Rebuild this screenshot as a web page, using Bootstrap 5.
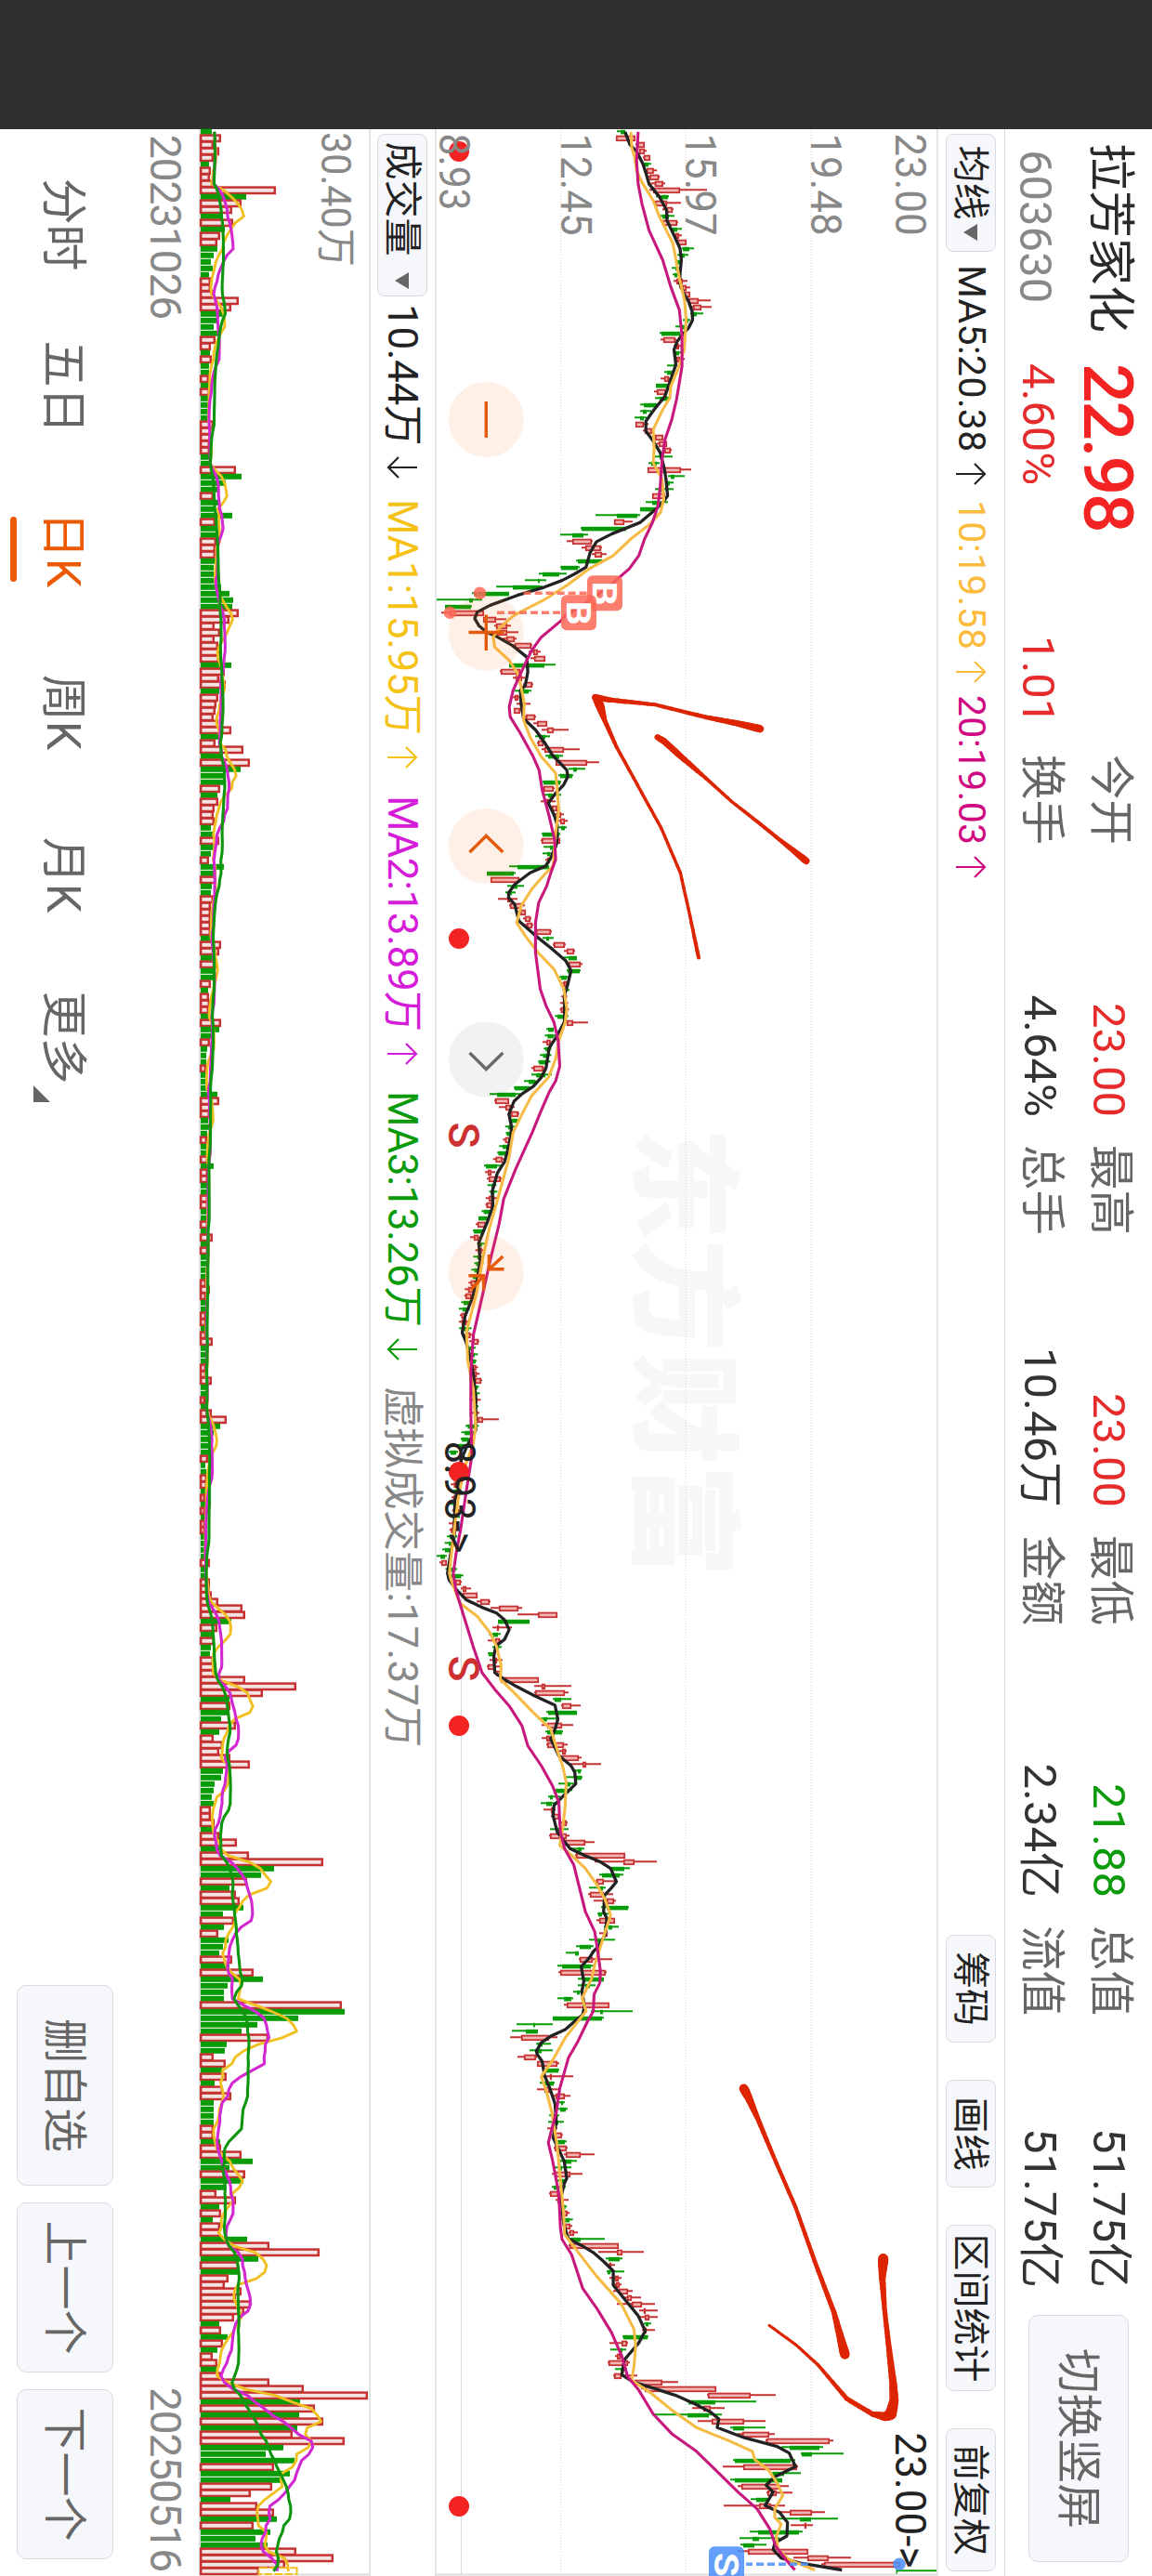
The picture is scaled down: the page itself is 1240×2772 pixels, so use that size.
<!DOCTYPE html>
<html lang="zh-CN">
<head>
    <meta charset="UTF-8">
    <meta name="viewport" content="width=device-width, initial-scale=1.0">
    <title>拉芳家化 603630</title>
    <!-- Bootstrap CSS -->
    <link href="https://cdn.jsdelivr.net/npm/bootstrap@5.3.3/dist/css/bootstrap.min.css" rel="stylesheet">
    <style>
        html, body { width: 1240px; height: 2772px; overflow: hidden; background: #fff; }
        body { font-family: Roboto, "Noto Sans CJK SC", sans-serif; color: #333; line-height: 1; }

        /* the whole page is laid out in landscape and turned a quarter */
        .viewport-box { width: 1240px; height: 2772px; overflow: hidden; }
        .screen { width: 2772px; height: 1240px; transform-origin: 0 0; transform: translateX(1240px) rotate(90deg); white-space: nowrap; }
        .notch { width: 139px; background: #303030; }
        .main-area { width: 2633px; }

        .c-up { color: #e52b2b; }
        .c-down { color: #0a9a0a; }
        .c-label { color: #666; }
        .c-grey { color: #888; }

        .quote-bar { height: 159px; border-bottom: 1px solid #d8d8d8; }
        .quote { display: grid; grid-template-columns: 237px 293px 143px; grid-template-rows: 80px 78px; align-items: center; width: 673px; padding-left: 15px; }
        .stock-name { font-size: 51px; color: #2a2a2a; padding-top: 9px; }
        .stock-price { grid-column: span 2; font-size: 75px; font-weight: 500; color: #f32323; letter-spacing: -2.2px; padding-top: 14px; }
        .stock-code { font-size: 49px; color: #888; padding: 13px 0 0 7px; }
        .stock-diff { font-size: 49px; padding-top: 7px; letter-spacing: -.1px; }
        .stat-pair { width: 390px; height: 74px; font-size: 48.5px; }
        .stat-num { font-size: 49px; padding-top: 3px; }
        .stats { gap: 30px; width: 1650px; padding-top: 8px; }

        .soft-btn { background: #f6f7fa; border: 1px solid #d8dbe0; border-radius: 10px; color: #222; line-height: 1; padding: 0; display: flex; align-items: center; justify-content: center; }
        .switch-btn { width: 266px; height: 108px; font-size: 48.5px; color: #666; margin: 25px 15px 0 auto; padding-top: 2px; }

        .tool-bar { height: 73px; border-bottom: 2px solid #e4e4e4; font-size: 41px; letter-spacing: .3px; padding: 0 5px; }
        .tool-btn { height: 54px; font-size: 40px; border-radius: 8px; padding-top: 2px; letter-spacing: 0; }
        .tri { border: 9px solid transparent; border-top: 15px solid #666; border-bottom: 0; }
        .arr { width: 24px; height: 34px; fill: none; stroke: currentColor; stroke-width: 2.2; }
        .c-ma5 { color: #222; }
        .c-ma10 { color: #fbbb3c; }
        .c-ma20 { color: #cf0a82; }
        .c-v5 { color: #f5c218; }
        .c-v10 { color: #d51cd8; }

        .price-chart { height: 538px; display: block; }
        .vol-bar { height: 73px; font-size: 44px; letter-spacing: -.35px; padding-left: 5px; border-top: 2px solid #e4e4e4; border-bottom: 2px solid #e4e4e4; }
        .vol-chart { height: 183px; display: block; }
        .date-axis { height: 62px; font-size: 46px; color: #888; letter-spacing: -1.1px; padding: 13px 5px 0 6px; }

        .period-tabs { font-size: 50px; color: #666; padding-left: 15px; }
        .period-tab { width: 175px; height: 104px; display: flex; align-items: center; justify-content: center; position: relative; padding-top: 3px; }
        .period-tab.active { color: #eb5a00; }
        .period-tab.active::after { content: ""; position: absolute; width: 70px; height: 7px; border-radius: 4px; background: #eb5a00; bottom: -7px; left: 52px; }
        .more-tri { position: absolute; left: 139px; bottom: 18px; border-left: 18px solid transparent; border-bottom: 18px solid #666; }
        .foot-btn { height: 104px; width: 183px; font-size: 48px; color: #666; padding-top: 2px; }
        svg { overflow: visible; }
        svg text { font-family: Roboto, "Noto Sans CJK SC", sans-serif; }
    </style>
</head>
<body>
<div class="viewport-box">
<div class="screen d-flex">
    <div class="notch flex-shrink-0"></div>
    <div class="main-area d-flex flex-column flex-shrink-0">

        <!-- Quote -->
        <header class="quote-bar d-flex flex-shrink-0">
            <div class="quote flex-shrink-0">
                <div class="stock-name">拉芳家化</div>
                <div class="stock-price">22.98</div>
                <div class="stock-code">603630</div>
                <div class="stock-diff c-up">4.60%</div>
                <div class="stock-diff c-up">1.01</div>
            </div>
            <div class="stats d-flex flex-shrink-0">
                <div>
                    <div class="stat-pair d-flex align-items-center justify-content-between"><span class="c-label">今开</span><span class="stat-num c-up">23.00</span></div>
                    <div class="stat-pair d-flex align-items-center justify-content-between"><span class="c-label">换手</span><span class="stat-num">4.64%</span></div>
                </div>
                <div>
                    <div class="stat-pair d-flex align-items-center justify-content-between"><span class="c-label">最高</span><span class="stat-num c-up">23.00</span></div>
                    <div class="stat-pair d-flex align-items-center justify-content-between"><span class="c-label">总手</span><span class="stat-num">10.46万</span></div>
                </div>
                <div>
                    <div class="stat-pair d-flex align-items-center justify-content-between"><span class="c-label">最低</span><span class="stat-num c-down">21.88</span></div>
                    <div class="stat-pair d-flex align-items-center justify-content-between"><span class="c-label">金额</span><span class="stat-num">2.34亿</span></div>
                </div>
                <div>
                    <div class="stat-pair d-flex align-items-center justify-content-between"><span class="c-label">总值</span><span class="stat-num">51.75亿</span></div>
                    <div class="stat-pair d-flex align-items-center justify-content-between"><span class="c-label">流值</span><span class="stat-num">51.75亿</span></div>
                </div>
            </div>
            <button class="soft-btn switch-btn" type="button">切换竖屏</button>
        </header>

        <!-- MA toolbar -->
        <div class="tool-bar d-flex align-items-center flex-shrink-0">
            <button class="soft-btn tool-btn" type="button" style="width: 127px">均线<i class="tri ms-1"></i></button>
            <span class="c-ma5 d-flex align-items-center" style="width: 253px; padding-left: 14px">MA5:20.38<svg class="arr" style="margin-left: 11px" viewBox="0 0 24 34"><path d="M12 33V2M1 13L12 2L23 13"/></svg></span>
            <span class="c-ma10 d-flex align-items-center" style="width: 210px; padding-left: 14px">10:19.58<svg class="arr" style="margin-left: 12px" viewBox="0 0 24 34"><path d="M12 33V2M1 13L12 2L23 13"/></svg></span>
            <span class="c-ma20 d-flex align-items-center" style="padding-left: 14px">20:19.03<svg class="arr" style="margin-left: 12px" viewBox="0 0 24 34"><path d="M12 33V2M1 13L12 2L23 13"/></svg></span>
            <div class="d-flex ms-auto" style="gap: 40px">
                <button class="soft-btn tool-btn" type="button" style="width: 116px">筹码</button>
                <button class="soft-btn tool-btn" type="button" style="width: 116px">画线</button>
                <button class="soft-btn tool-btn" type="button" style="width: 179px">区间统计</button>
                <button class="soft-btn tool-btn" type="button" style="width: 154px">前复权</button>
            </div>
        </div>

        <!-- Price chart -->
        <svg class="price-chart flex-shrink-0" id="priceChart" width="2633" height="538" viewBox="139 232 2633 538"></svg>

        <!-- Volume legend -->
        <div class="vol-bar d-flex align-items-center flex-shrink-0">
            <button class="soft-btn tool-btn" type="button" style="width: 175px; font-size: 41px">成交量<i class="tri" style="margin-left: 17px"></i></button>
            <span class="c-ma5 d-flex align-items-center" style="width: 212px; padding-left: 8px">10.44万<svg class="arr" style="margin-left: 12px" viewBox="0 0 24 34"><path d="M12 1V32M1 21L12 32L23 21"/></svg></span>
            <span class="c-v5 d-flex align-items-center" style="width: 319px; padding-left: 6px">MA1:15.95万<svg class="arr" style="margin-left: 12px" viewBox="0 0 24 34"><path d="M12 33V2M1 13L12 2L23 13"/></svg></span>
            <span class="c-v10 d-flex align-items-center" style="width: 318px; padding-left: 6px">MA2:13.89万<svg class="arr" style="margin-left: 12px" viewBox="0 0 24 34"><path d="M12 33V2M1 13L12 2L23 13"/></svg></span>
            <span class="c-down d-flex align-items-center" style="width: 324px; padding-left: 6px">MA3:13.26万<svg class="arr" style="margin-left: 12px" viewBox="0 0 24 34"><path d="M12 1V32M1 21L12 32L23 21"/></svg></span>
            <span class="c-grey" style="letter-spacing: .3px">虚拟成交量:17.37万</span>
        </div>

        <!-- Volume chart -->
        <svg class="vol-chart flex-shrink-0" id="volChart" width="2633" height="183" viewBox="139 843 2633 183"></svg>

        <div class="date-axis d-flex justify-content-between flex-shrink-0">
            <span>20231026</span><span>20250516</span>
        </div>

        <!-- Bottom bar -->
        <footer class="d-flex flex-grow-1" style="padding-top: 30px">
            <nav class="period-tabs d-flex">
                <div class="period-tab">分时</div>
                <div class="period-tab">五日</div>
                <div class="period-tab active">日K</div>
                <div class="period-tab">周K</div>
                <div class="period-tab">月K</div>
                <div class="period-tab">更多<i class="more-tri"></i></div>
            </nav>
            <div class="d-flex ms-auto" style="gap: 18px; margin-right: 18px">
                <button class="soft-btn foot-btn" type="button" style="width: 216px">删自选</button>
                <button class="soft-btn foot-btn" type="button">上一个</button>
                <button class="soft-btn foot-btn" type="button">下一个</button>
            </div>
        </footer>
    </div>
</div>
</div>

<script>
    const BASE = 1240;   // values count upwards from the bottom edge
    const STEP = 7, FIRST = 141.8;
    const RED = '#c63232', GREEN = '#089c08';
    const dayX = i => FIRST + STEP * i;

    // Daily volume, negative = falling day
    const vol = [
        -12,22,14,20,14,-9,11,10,14,81,-49,44,34,-24,35,-26,21,18,-18,-14,-11,-13,-9,11,11,14,41,33,-24,-17,-14,-20,16,11,-10,12,-9,-9,9,-9,
        10,-8,-8,-8,-8,14,14,11,10,10,-11,-9,38,-44,-27,-18,14,-19,-14,-34,16,-18,-18,17,16,16,-17,-14,-14,-16,-22,-31,-35,-34,41,31,15,21,15,19,
        20,20,-33,26,20,27,-20,19,17,16,14,19,33,-21,16,46,-24,53,-43,-25,-25,21,-18,19,15,14,15,-11,-14,20,-14,-11,9,-25,-17,17,-12,-11,14,11,
        11,11,11,11,-12,22,20,-16,18,-15,-14,11,-8,9,10,9,-9,22,-20,-11,10,-7,-6,-6,6,-7,-7,-7,-18,20,11,10,-8,-9,-7,7,-6,-7,8,-14,
        8,8,-7,-7,8,8,-7,-7,8,-6,13,-7,8,-6,-6,-6,-7,6,10,6,-6,-6,6,6,-6,6,13,-6,-5,-5,6,6,12,-6,-6,5,-5,12,28,-21,
        -14,-12,-9,-10,8,-5,-6,7,7,-6,5,-6,5,-5,5,5,-5,-5,-5,-5,10,-5,-6,10,10,12,19,45,48,-33,18,-15,15,-11,-10,14,17,16,48,103,
        67,-31,32,-31,-22,38,-20,14,24,20,32,53,-24,-22,-15,-14,-12,-14,11,11,15,-16,20,39,-20,52,132,-79,-65,50,-31,38,42,-46,-24,36,-25,19,-30,-24,
        -20,34,-31,57,-67,-29,-25,-25,152,-155,-105,-61,-44,73,-28,-26,14,27,-23,28,-15,24,33,-14,-14,-14,-14,14,14,-21,22,44,-56,-31,48,-46,-27,17,38,-20,
        22,-13,21,21,-50,74,128,-62,41,-40,30,26,44,38,54,47,36,-20,22,-29,24,-18,13,18,-17,22,74,111,180,-107,123,-106,132,-104,99,155,-89,-70,-101,79,
        -96,-86,77,54,-32,61,79,-82,57,-75,-59,-72,103,143,91,63
    ];

    // A line is kept in pieces: [x offset, value offset, x scale, value scale, points]
    const joinPieces = pieces => {
        const out = [];
        pieces.forEach(([x0, v0, kx, kv, pts]) => {
            for (let k = 0; k < pts.length; k += 2) {
                const x = x0 + pts[k] / kx, v = v0 + pts[k + 1] / kv;
                if (!out.length || x > out[out.length - 1][0] + 3) out.push([x, v]);
            }
        });
        return out;
    };
    const K = 2.904;
    const ma5 = joinPieces([
        [130, 450, 2.8, K, [33,647,72,662,92,683,130,703,160,713,190,722,230,755,270,777,300,778,345,800,385,819,420,823,460,819,490,818,520,830,545,846,575,857,600,858,625,845,645,825,665,810,690,800,735,806,770,793,830,772,870,738,905,712,935,712,965,735,1000,757,1050,770,1080,775,1130,780,1150,765,1175,738,1210,695,1245,605,1268,558,1300,538,1345,525,1365,490,1385,450,1405,395,1430,310,1460,225,1480,185,1500,177]],
        [600, 450, 2.8, K, [205,190,225,215,235,240,265,295,300,340,345,343,385,335,400,320,440,322,485,330,520,368,560,397,595,420,640,465,660,468,685,455,710,430,740,407,775,425,805,435,860,434,905,415,930,398,950,350,985,302,1010,283,1025,283,1045,302,1095,315,1140,368,1180,420,1215,462,1245,478,1285,468,1320,457,1380,458]],
        [1100, 450, 2.529, K, [0,457,40,432,70,410,125,400,150,385,175,360,195,325,215,300,250,284,285,292,310,290,360,277,380,270,410,248,460,232,500,234,540,218,600,190,650,194,700,185,750,170,800,147,845,138,870,150,920,165,960,173,1020,180,1080,180,1110,180,1150,155,1190,135,1220,130,1250,135,1300,115,1400,113,1440,103,1500,92]],
        [1700, 450, 2.8, K, [0,97,30,120,60,150,85,205,100,245,120,270,150,285,180,270,200,243,230,237,280,240,300,270,320,305,350,365,378,428,420,437,450,428,480,415,530,440,560,478,580,490,615,493,650,455,680,425,710,422,760,435,785,455,810,475,830,520,850,570,870,602,910,620,930,603,950,583,1000,580,1020,590,1070,585,1105,563,1120,548,1140,535,1165,510,1210,518,1240,512,1285,520,1310,515,1330,490,1355,460,1375,415,1395,385,1420,370]],
        [2200, 450, 2.741, K, [30,373,50,388,90,395,130,412,175,428,230,432,275,422,310,440,345,457,395,465,410,457,450,447,530,455,573,470,595,515,615,550,640,580,668,610,710,610,745,640,800,688,845,710,880,690,930,645,975,637,995,672,1015,740,1035,805,1060,865,1085,915,1105,940,1130,935,1160,1020,1185,1120,1205,1160,1245,1180,1275,1115,1300,1088,1320,1110,1360,1085,1380,1130,1410,1155,1450,1153,1470,1115,1490,1110,1515,1135,1530,1195,1550,1325]]
    ]);
    const ma10 = joinPieces([
        [130, 450, 2.8, K, [33,665,80,668,110,677,150,683,185,700,240,735,290,755,370,797,430,808,480,818,540,833,600,838,690,832,750,812,800,790,835,787,870,765,930,735,985,738,1030,735,1080,763,1140,768,1180,758,1215,725,1260,665,1310,610,1350,535,1400,465,1440,400,1490,300]],
        [600, 450, 2.8, K, [190,280,215,252,240,235,270,240,310,285,350,312,390,322,440,332,490,330,540,350,600,385,650,430,700,435,760,440,830,430,930,422,950,400,1000,355,1050,322,1100,308,1140,335,1190,375,1240,425,1300,456,1360,465]],
        [1100, 450, 2.529, K, [0,460,50,440,100,430,150,408,200,355,250,325,300,297,370,284,440,262,500,243,560,223,600,213,640,203,740,182,840,152,920,155,1000,173,1100,180,1150,172,1220,142,1300,125,1440,105,1500,98]],
        [1700, 450, 2.8, K, [0,103,70,130,110,185,160,225,200,245,260,260,300,257,340,300,400,360,450,415,520,437,560,452,610,463,680,460,740,453,800,443,830,480,870,523,920,560,960,583,1010,602,1070,582,1160,552,1200,543,1260,513,1300,525,1330,500,1380,460]],
        [2200, 450, 2.741, K, [40,425,95,385,140,402,200,418,300,435,400,445,500,455,560,458,600,490,680,555,765,635,840,675,890,680,950,675,990,668,1030,730,1080,795,1130,870,1170,975,1200,1045,1225,1053,1255,1095,1290,1120,1330,1140,1370,1115,1395,1115,1415,1135,1450,1120,1490,1125,1520,1160,1550,1240]]
    ]);
    const ma20 = joinPieces([
        [130, 450, 2.8, K, [33,688,120,683,190,688,250,700,330,722,420,765,500,790,570,817,650,825,740,825,840,808,900,793,960,772,1020,763,1100,757,1160,750,1210,733,1260,708,1310,690,1350,660,1400,600,1450,530,1490,460]],
        [600, 450, 2.8, K, [190,447,240,385,280,355,340,325,400,297,450,285,480,288,530,320,600,360,640,378,700,388,780,410,850,427,910,430,950,415,990,402,1040,377,1100,367,1190,367,1300,382,1350,400]],
        [1100, 450, 2.529, K, [0,425,50,438,120,443,160,430,190,410,240,385,300,357,400,305,480,268,550,253,650,225,740,202,850,173,950,165,1060,165,1180,168,1280,150,1380,133,1440,120,1500,110]],
        [1700, 450, 2.8, K, [30,118,100,140,200,172,280,200,330,240,380,285,440,325,500,343,560,385,620,420,670,440,760,445,810,458,860,487,930,505,1000,523,1060,552,1120,562,1180,570,1215,568,1250,550,1300,548,1330,530,1390,500]],
        [2200, 450, 2.741, K, [40,470,130,443,200,432,250,418,290,407,340,420,440,440,540,445,575,450,620,480,720,515,780,560,850,605,920,637,980,655,1020,690,1090,735,1150,795,1200,870,1260,935,1320,1000,1370,1060,1430,1100,1480,1118,1520,1150,1550,1178]]
    ]);

    // Candles: [low, body low, body high, high]; days left out sit on the MA5
    const candles = {
        0:[664,668,673,673],1:[663,663,684,684],2:[684,686,694,694],3:[688,688,694,696],4:[692,693,700,700],5:[692,694,698,701],9:[699,703,732,761],
        10:[706,712,719,720],11:[705,705,718,733],12:[713,717,724,725],13:[710,713,720,726],14:[713,713,729,730],15:[722,724,729,734],16:[724,727,731,734],17:[728,729,739,739],18:[734,735,742,747],19:[729,733,737,741],
        20:[727,729,732,733],21:[723,727,729,731],22:[724,726,729,731],23:[725,728,735,740],24:[731,734,739,743],25:[734,736,743,743],26:[740,741,752,765],27:[742,746,755,766],28:[743,746,750,757],29:[735,738,741,743],30:[727,732,737,739],31:[710,712,732,732],32:[711,714,727,728],
        33:[725,728,731,733],34:[725,727,731,733],35:[726,728,732,737],36:[718,725,727,729],37:[715,718,725,725],38:[711,715,720,722],39:[706,706,720,723],40:[704,707,717,717],41:[705,710,720,722],42:[689,693,707,707],43:[689,692,696,701],44:[683,689,693,696],45:[684,684,693,698],46:[692,694,702,702],47:[703,705,714,714],48:[707,709,718,718],49:[713,715,722,723],
        50:[704,710,714,724],51:[698,701,707,710],52:[697,697,733,744],53:[719,722,726,737],54:[717,719,721,725],55:[705,709,713,725],56:[702,702,716,716],57:[695,702,708,719],58:[689,689,706,707],59:[641,664,686,689],
        60:[661,661,672,681],61:[625,626,674,674],62:[603,616,628,633],63:[610,616,637,638],64:[626,630,647,648],65:[637,640,648,653],66:[620,622,648,649],67:[603,604,622,624],68:[580,584,602,610],69:[565,579,581,588],
        70:[534,552,581,584],71:[508,510,548,548],72:[470,505,509,519],73:[479,479,507,508],74:[475,484,521,521],75:[520,520,534,545],76:[532,534,546,550],77:[529,534,546,558],78:[541,545,554,556],79:[550,554,572,573],
        80:[569,574,579,582],81:[571,575,587,587],82:[548,548,586,598],83:[538,539,560,560],84:[552,555,562,565],85:[563,565,573,574],86:[554,561,569,572],87:[550,554,558,560],88:[556,560,562,571],89:[553,553,560,562],
        90:[563,566,576,577],91:[574,578,589,589],92:[583,589,596,612],93:[576,580,587,592],94:[578,579,585,588],95:[583,586,607,624],96:[587,590,602,606],97:[598,598,632,645],98:[612,617,621,630],99:[601,603,616,617],
        100:[584,585,603,604],101:[582,585,596,597],102:[584,590,594,604],103:[582,588,591,598],104:[591,594,600,600],105:[596,599,604,607],106:[601,603,608,611],107:[601,604,608,610],108:[583,584,602,603],109:[582,583,603,603],
        110:[585,592,596,600],111:[584,589,592,595],112:[587,589,592,593],113:[548,557,591,591],114:[524,524,553,555],115:[528,528,559,560],116:[546,551,557,564],117:[544,547,551,555],118:[536,546,549,557],119:[548,549,562,565],
        120:[557,560,566,566],121:[563,565,571,572],122:[565,567,573,574],123:[577,577,593,594],124:[584,588,591,596],125:[595,596,608,609],126:[607,610,618,619],127:[607,612,621,621],128:[612,612,625,627],129:[610,611,624,625],130:[602,604,610,612],
        137:[607,610,617,633],138:[588,590,596,596],145:[572,577,587,594],146:[564,569,576,577],147:[553,554,570,572],148:[527,535,555,560],149:[532,533,548,548],150:[537,544,550,554],151:[548,550,558,559],152:[550,551,557,559],
        159:[521,523,535,539],160:[522,525,529,533],161:[524,526,539,540],167:[515,515,524,525],168:[512,514,523,524],169:[509,510,521,521],170:[506,510,515,516],186:[505,508,515,516],192:[510,511,518,519],198:[512,514,520,537],
        202:[489,493,503,505],203:[483,485,491,493],218:[476,479,484,485],219:[469,474,479,481],220:[473,475,481,481],223:[489,490,496,497],224:[496,498,502,507],225:[496,498,514,514],226:[513,517,527,528],227:[528,537,558,562],228:[557,579,600,600],229:[536,536,570,570],
        230:[530,535,537,551],231:[526,531,536,539],232:[525,533,538,539],233:[530,533,537,540],234:[525,526,530,533],235:[527,532,535,541],236:[524,525,533,539],237:[532,534,539,540],238:[539,539,580,580],239:[575,583,587,615],
        240:[575,576,608,612],241:[595,597,604,615],242:[604,605,615,625],243:[588,590,621,621],244:[579,585,589,600],245:[583,589,605,617],246:[587,589,605,606],247:[583,588,592,593],248:[588,589,607,611],249:[601,605,609,610],
        250:[603,604,623,626],251:[614,627,631,647],252:[619,622,625,626],253:[608,618,626,627],254:[601,610,614,618],255:[598,598,613,616],256:[590,592,595,603],257:[582,588,594,598],258:[585,593,597,598],259:[593,595,602,603],
        260:[601,606,610,611],261:[592,600,604,612],262:[591,592,610,613],263:[607,608,630,640],264:[615,622,626,629],265:[619,620,673,673],266:[640,671,683,707],267:[656,658,672,678],268:[645,648,667,671],269:[641,642,650,663],
        270:[634,644,649,652],271:[633,635,650,660],272:[639,653,661,663],273:[647,653,676,677],274:[643,644,648,655],275:[642,645,662,662],276:[650,655,659,666],277:[645,651,654,654],278:[634,641,646,662],279:[620,624,636,639],
        280:[609,619,623,623],281:[623,624,638,659],282:[600,605,636,639],283:[601,603,652,653],284:[622,627,650,650],285:[622,630,635,641],286:[617,621,624,626],287:[600,607,615,617],288:[607,610,656,656],289:[636,646,649,681],
        290:[595,595,648,650],291:[556,574,576,595],292:[551,566,579,579],293:[549,561,591,600],294:[577,579,584,593],295:[570,576,583,595],296:[557,564,577,578],297:[578,578,600,602],298:[586,587,601,602],299:[583,592,594,617],
        300:[581,586,596,597],301:[578,586,592,602],302:[596,598,608,614],303:[601,604,606,608],304:[600,603,609,611],306:[590,597,601,607],307:[589,594,598,600],310:[596,597,610,611],311:[607,609,625,640],312:[601,608,615,621],313:[595,601,605,615],314:[594,597,614,627],316:[594,596,600,609],317:[591,592,601,602],318:[598,600,606,612],
        322:[607,608,614,616],323:[612,613,618,622],324:[614,615,625,651],325:[612,613,666,666],326:[644,664,670,693],327:[652,655,667,670],328:[653,656,658,662],329:[653,654,657,672],330:[656,662,666,669],331:[659,663,667,669],332:[660,666,676,681],333:[669,675,680,690],334:[664,680,691,705],335:[688,693,695,708],336:[688,694,699,708],337:[693,695,698,701],338:[691,694,696,705],339:[670,671,697,698],
        340:[656,669,675,676],341:[657,668,670,674],342:[662,664,668,670],343:[654,655,676,678],344:[662,668,671,675],345:[660,661,669,686],346:[682,683,713,730],347:[690,694,771,771],348:[761,762,808,835],349:[739,741,770,814],
        350:[745,757,765,780],351:[703,740,763,777],352:[751,766,801,824],353:[786,789,801,824],354:[794,799,828,834],355:[824,825,893,897],356:[841,850,882,886],357:[862,863,874,908],358:[789,791,851,856],359:[778,800,858,859],
        360:[831,832,844,862],361:[786,791,842,842],362:[794,798,839,849],363:[825,826,836,853],364:[808,814,826,828],365:[779,817,830,845],366:[839,850,874,888],367:[836,861,873,902],368:[851,867,868,875],369:[807,816,860,864],
        370:[796,810,817,839],371:[797,800,812,825],372:[794,805,870,870],373:[854,869,892,916],374:[884,887,969,969],375:[965,965,966,1008]
    };

    const valueAt = (pts, x) => {
        for (let k = 1; k < pts.length; k++) {
            if (pts[k][0] >= x) {
                const [xa, va] = pts[k - 1], [xb, vb] = pts[k];
                return va + (vb - va) * (x - xa) / (xb - xa);
            }
        }
        return pts[pts.length - 1][1];
    };
    const poly = (pts, color, w) => `<polyline points="${pts.map(p => p[0].toFixed(1) + ',' + (BASE - p[1]).toFixed(1)).join(' ')}" fill="none" stroke="${color}" stroke-width="${w}" stroke-linejoin="round"/>`;
    const label = (x, v, size, len, color, str, extra = '') => `<text x="${x}" y="${BASE - v}" font-size="${size}" fill="${color}" textLength="${len}" lengthAdjust="spacingAndGlyphs" ${extra}>${str}</text>`;

    let s = '';
    // Grid and watermark
    s += '<text x="1213" y="547" font-size="121" font-weight="900" fill="#f7f7f7" textLength="484">东方财富</text>';
    [603.5, 738, 873].forEach(v => s += `<line x1="139" x2="2770" y1="${BASE - v}" y2="${BASE - v}" stroke="#d4d4d4" stroke-dasharray="1 2"/>`);
    s += '<line x1="1705" x2="2770" y1="743.5" y2="743.5" stroke="#d8d8d8"/><line x1="2770.5" x2="2770.5" y1="232" y2="770" stroke="#dedede" stroke-width="2"/>';

    // Candles
    vol.forEach((n, i) => {
        const x = dayX(i);
        let c = candles[i];
        if (!c) {
            const a = valueAt(ma5, x + 9), b = valueAt(ma5, x + 18), r = (i * 37 % 11) / 3;
            c = [Math.min(a, b) - 2 - r, Math.min(a, b) - 1, Math.max(a, b) + 2, Math.max(a, b) + 3 + (i * 23 % 7) / 2];
        }
        const [lo, b0, b1, hi] = c;
        const up = n > 0 && i !== 375;
        const col = up ? RED : GREEN;
        s += `<line x1="${x - .5}" x2="${x - .5}" y1="${BASE - hi}" y2="${BASE - lo}" stroke="${col}" stroke-width="2"/>`;
        s += up
            ? `<rect x="${x - 2.2}" y="${BASE - b1 + .8}" width="4.6" height="${Math.max(b1 - b0 - 1.6, .5)}" fill="#f3b4b4" stroke="${RED}" stroke-width="1.8"/>`
            : `<rect x="${x - 2}" y="${BASE - b1}" width="4.6" height="${Math.max(b1 - b0, 1.5)}" fill="${GREEN}"/>`;
    });
    s += poly(ma5, '#222', 3.3) + poly(ma10, '#f5bb45', 3.1) + poly(ma20, '#c8187e', 3.1);

    // Signal dots and letters
    [163, 1010, 1584, 1857, 2697].forEach(x => s += `<circle cx="${x}" cy="746" r="11" fill="#f32323"/>`);
    [1207.5, 1781.5].forEach(x => s += label(x, 483, 47, 28, '#cc3030', 'S', 'font-weight="500"'));

    // Buy and sell marks
    const mark = (x, dotV, v0, v1, boxV, color, letter) => {
        s += `<g opacity=".86"><line x1="${x}" x2="${x}" y1="${BASE - v0}" y2="${BASE - v1}" stroke="${color}" stroke-width="3.5" stroke-dasharray="8 4"/><circle cx="${x}" cy="${BASE - dotV}" r="6.8" fill="${color}"/>`;
        s += `<rect x="${x - 19}" y="${BASE - boxV - 38}" width="38" height="38" rx="6" fill="${color}"/></g><text x="${x - 12.5}" y="${BASE - boxV - 6}" font-size="36" font-weight="700" fill="#fff" textLength="26" lengthAdjust="spacingAndGlyphs">${letter}</text>`;
    };
    mark(638.2, 516.5, 563.6, 632, 632, '#fb6a58', 'B');
    mark(659.3, 484.4, 535, 603, 604, '#fb6a58', 'B');
    mark(2759.3, 968, 870, 803, 763, '#4a90fb', 'S');

    // Round chart buttons
    const round = (x, grey, d) => s += `<circle cx="${x}" cy="716.7" r="40.5" fill="${grey ? '#000' : '#ff6a10'}" opacity="${grey ? .05 : .1}"/><path d="${d}" fill="none" stroke="${grey ? '#6a6a6a' : '#e55a0a'}" stroke-width="3.4"/>`;
    round(451.5, 0, 'M432 716.7H471');
    round(681, 0, 'M661.5 716.7H700M680.5 697.5V735.5');
    round(910.5, 0, 'M917 698.7L899.5 716.7L917 734.5');
    round(1140, 1, 'M1133 698.7L1150.5 716.7L1133 734.5');
    round(1369.5, 0, 'M1351.9 698.7L1365.7 713.6M1350 713.6H1365.7V697.4M1387.9 733.2L1372.8 719.4M1388.6 719.4H1372.8V735.6');

    // Axis and extreme labels
    [[472.5, 83, '8.93'], [603.5, 110, '12.45'], [738, 110, '15.97'], [873, 110, '19.48'], [964, 110, '23.00']].forEach(([v, len, t]) => s += label(143.5, v, 46, len, '#888', t));
    s += label(1550.5, 479, 46, 121, '#222', '8.93-&gt;') + label(2617.5, 964, 46, 146, '#222', '23.00-&gt;');

    // Hand-drawn arrows: [value, x, brush width] in the same pieces as above
    const brush = (x0, kx, pts) => {
        for (let k = 1; k < pts.length; k++) {
            const [a, b] = [pts[k - 1], pts[k]];
            for (let j = 0; j < 6; j++) {
                const at = (m, f) => a[m] + (b[m] - a[m]) * f;
                const p = f => [x0 + at(1, f) / kx, BASE - 450 - at(0, f) / K];
                const [xa, ya] = p(j / 6), [xb, yb] = p((j + 1) / 6);
                s += `<line x1="${xa.toFixed(1)}" y1="${ya.toFixed(1)}" x2="${xb.toFixed(1)}" y2="${yb.toFixed(1)}" stroke="#dd2502" stroke-width="${(at(2, (j + .5) / 6) / 2.6).toFixed(2)}" stroke-linecap="round"/>`;
            }
        }
    };
    brush(600, 2.8, [[1069,516,22],[1000,500,17],[900,481,12],[740,443,10],[600,429,14],[554,421,18]]);
    brush(600, 2.8, [[554,421,18],[568,445,25],[583,490,13],[620,570,10],[700,710,9],[760,815,9],[820,950,9],[850,1080,9],[877,1205,11]]);
    brush(600, 2.8, [[748,541,16],[770,554,18],[820,598,17],[900,665,10],[980,735,9],[1060,795,10],[1130,850,11],[1180,888,16],[1213,914,20]]);
    brush(2200, 2.741, [[1018,130,26],[1032,155,22],[1060,215,14],[1120,350,11],[1180,480,11],[1240,640,12],[1300,790,14],[1322,870,22],[1334,914,28]]);
    brush(2200, 2.741, [[1454,632,30],[1451,690,18],[1458,780,13],[1470,880,15],[1485,1000,21],[1488,1050,25],[1478,1090,32],[1460,1098,24],[1420,1090,14],[1340,1045,13],[1250,945,9],[1180,885,8],[1098,829,8]]);
    document.getElementById('priceChart').innerHTML = s;

    // Volume chart
    s = '<line x1="139" x2="2772" y1="1025" y2="1025" stroke="#ddd" stroke-width="2"/><line x1="2770.5" x2="2770.5" y1="843" y2="1026" stroke="#dedede" stroke-width="2"/>';
    vol.forEach((n, i) => {
        const x = dayX(i), h = Math.abs(n);
        s += n > 0
            ? `<rect x="${x - 3.2}" y="${1025.2 - h}" width="6.4" height="${h - 1.4}" fill="#f3e3e3" stroke="${RED}" stroke-width="2.5"/>`
            : `<rect x="${x - 3}" y="${1024 - h}" width="6" height="${h}" fill="${GREEN}"/>`;
    });
    s += '<rect x="2763.3" y="920.5" width="6.8" height="41" fill="#fff" stroke="#f0c020" stroke-width="2" stroke-dasharray="9 2"/>';
    const mean = n => vol.map((_, i) => {
        const part = vol.slice(Math.max(0, i - n + 1), i + 1).map(Math.abs);
        while (part.length < n) part.push(15);
        return [dayX(i), 216 + part.reduce((a, b) => a + b) / n];
    });
    s += poly(mean(5), '#f0c020', 2.9) + poly(mean(10), '#d228d2', 3.1) + poly(mean(20), '#0d960d', 3.1);
    s += label(142, 346, 44, 145, '#888', '30.40万');
    document.getElementById('volChart').innerHTML = s;
</script>

<!-- Bootstrap JS -->
<script src="https://cdn.jsdelivr.net/npm/bootstrap@5.3.3/dist/js/bootstrap.bundle.min.js"></script>
</body>
</html>
